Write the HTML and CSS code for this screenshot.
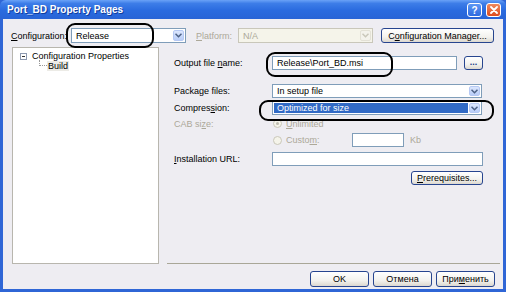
FILE: index.html
```html
<!DOCTYPE html>
<html lang="en">
<head>
<meta charset="UTF-8">
<title>Port_BD Property Pages</title>
<link rel="stylesheet" href="styles.css">
</head>
<body>
<div class="window">
    <div class="titlebar">
        <span class="title">Port_BD Property Pages</span>
        <div class="caption-btns">
            <span class="cap-btn help">?</span>
            <span class="cap-btn close">
                <svg width="8" height="8" viewBox="0 0 8 8"><path d="M1 1L7 7M7 1L1 7" stroke="#fff" stroke-width="1.8" stroke-linecap="round"/></svg>
            </span>
        </div>
    </div>
    <div class="client">
        <div class="config-row">
            <span class="lbl cfg-lbl"><u>C</u>onfiguration:</span>
            <div class="combo cfg-combo">
                <span class="combo-text">Release</span>
                <span class="drop"><svg width="7" height="5" viewBox="0 0 7 5"><path d="M0.5 0.8L3.5 3.8L6.5 0.8" fill="none" stroke="#4d6185" stroke-width="1.5"/></svg></span>
                <span class="mark mark-cfg"></span>
            </div>
            <span class="lbl disabled plat-lbl"><u>P</u>latform:</span>
            <div class="combo plat-combo off">
                <span class="combo-text">N/A</span>
                <span class="drop"><svg width="7" height="5" viewBox="0 0 7 5"><path d="M0.5 0.8L3.5 3.8L6.5 0.8" fill="none" stroke="#c9c7ba" stroke-width="1.5"/></svg></span>
            </div>
            <button class="btn cfg-mgr">C<u>o</u>nfiguration Manager...</button>
        </div>

        <div class="main">
            <div class="tree">
                <div class="node root">
                    <span class="expander"></span>
                    <span>Configuration Properties</span>
                </div>
                <div class="node child">
                    <span class="connector"></span>
                    <span class="leaf">Build</span>
                </div>
            </div>

            <div class="props">
                <div class="row row-output">
                    <span class="lbl field-lbl">Output file <u>n</u>ame:</span>
                    <div class="textbox out-box">
                        <span>Release\Port_BD.msi</span>
                        <span class="mark mark-out"></span>
                    </div>
                    <button class="btn browse">...</button>
                </div>
                <div class="row row-package">
                    <span class="lbl field-lbl">Package files:</span>
                    <div class="combo wide">
                        <span class="combo-text">In setup file</span>
                        <span class="drop"><svg width="7" height="5" viewBox="0 0 7 5"><path d="M0.5 0.8L3.5 3.8L6.5 0.8" fill="none" stroke="#4d6185" stroke-width="1.5"/></svg></span>
                    </div>
                </div>
                <div class="row row-compress">
                    <span class="lbl field-lbl">Compres<u>s</u>ion:</span>
                    <div class="combo wide">
                        <span class="combo-text selected">Optimized for size</span>
                        <span class="drop"><svg width="7" height="5" viewBox="0 0 7 5"><path d="M0.5 0.8L3.5 3.8L6.5 0.8" fill="none" stroke="#4d6185" stroke-width="1.5"/></svg></span>
                        <span class="mark mark-comp"></span>
                    </div>
                </div>
                <div class="row row-cab">
                    <span class="lbl field-lbl disabled">CAB si<u>z</u>e:</span>
                    <span class="radio checked"></span>
                    <span class="lbl disabled"><u>U</u>nlimited</span>
                </div>
                <div class="row row-custom">
                    <span class="lbl field-lbl"></span>
                    <span class="radio"></span>
                    <span class="lbl disabled custom-lbl">Custo<u>m</u>:</span>
                    <div class="textbox kb-box off"></div>
                    <span class="lbl disabled kb-lbl">Kb</span>
                </div>
                <div class="row row-url">
                    <span class="lbl field-lbl"><u>I</u>nstallation URL:</span>
                    <div class="textbox url-box"></div>
                </div>
                <div class="row row-prereq">
                    <button class="btn prereq"><u>P</u>rerequisites...</button>
                </div>
            </div>
        </div>

        <div class="footer">
            <button class="btn dlg-btn">OK</button>
            <button class="btn dlg-btn">Отмена</button>
            <button class="btn dlg-btn">При<u>м</u>енить</button>
        </div>
    </div>
</div>
</body>
</html>
```

FILE: styles.css
```css
* {
    box-sizing: border-box;
}

body {
    margin: 0;
    font-family: "Liberation Sans", Arial, sans-serif;
    font-size: 9px;
    color: #000;
}

.window {
    width: 506px;
    height: 292px;
    display: flex;
    flex-direction: column;
    background: #2f66d6;
}

.titlebar {
    height: 19px;
    display: flex;
    align-items: center;
    justify-content: space-between;
    padding: 0 5px 0 7px;
    background: linear-gradient(#6aa2f7 0%, #3d7de8 18%, #2a6bdf 55%, #2864d6 100%);
    border-radius: 6px 6px 0 0;
}

.title {
    color: #fff;
    font-weight: bold;
    font-size: 10px;
    text-shadow: 1px 1px 0 #0f3c9c;
}

.caption-btns {
    display: flex;
    gap: 4px;
    padding-top: 1px;
}

.cap-btn {
    width: 15px;
    height: 14px;
    border: 1px solid #fff;
    border-radius: 3px;
    display: flex;
    align-items: center;
    justify-content: center;
    color: #fff;
    font-weight: bold;
    font-size: 10px;
}

.help {
    background: linear-gradient(#5d97f4, #2d6ae0);
}

.close {
    background: linear-gradient(#f08a5e, #dc4b1f);
}

.client {
    flex: 1;
    margin: 0 3px 3px 3px;
    background: #eeedf2;
    display: flex;
    flex-direction: column;
}

.lbl {
    white-space: nowrap;
}

.disabled {
    color: #aca899;
}

/* top configuration row */
.config-row {
    display: flex;
    align-items: center;
    height: 15px;
    margin-top: 9px;
    padding: 0 9px 0 8px;
}

.cfg-lbl {
    width: 60px;
}

.plat-lbl {
    margin-left: 10px;
    width: 42px;
}

.combo {
    position: relative;
    height: 15px;
    display: flex;
    align-items: center;
    background: #fff;
    border: 1px solid #7f9db9;
    padding: 1px;
}

.combo-text {
    flex: 1;
    height: 100%;
    display: flex;
    align-items: center;
    padding-left: 3px;
    white-space: nowrap;
}

.combo-text.selected {
    background: #316ac5;
    color: #fff;
}

.drop {
    width: 11px;
    height: 100%;
    margin-left: 1px;
    display: flex;
    align-items: center;
    justify-content: center;
    border: 1px solid #b6c9f4;
    border-radius: 2px;
    background: linear-gradient(#dbe6fd, #b9cdf8);
}

.cfg-combo {
    width: 115px;
}

.plat-combo {
    width: 135px;
}

.off {
    background: #f5f4ea;
    border-color: #c9c7ba;
    color: #aca899;
}

.off .drop {
    border-color: #e3e1d6;
    background: #f3f2ec;
}

.btn {
    font-family: "Liberation Sans", Arial, sans-serif;
    font-size: 9px;
    color: #000;
    height: 15px;
    padding: 0;
    border: 1px solid #27458f;
    border-radius: 3px;
    background: linear-gradient(#ffffff, #f3f2ee 60%, #dcd8cf);
    white-space: nowrap;
}

.cfg-mgr {
    margin-left: auto;
    width: 113px;
}

/* annotation ovals drawn over the screenshot */
.mark {
    position: absolute;
    border: 2px solid #000;
    border-radius: 9px;
}

.mark-cfg {
    left: -6px;
    top: -6px;
    width: 88px;
    height: 25px;
}

.mark-out {
    left: -7px;
    top: -5px;
    width: 127px;
    height: 25px;
}

.mark-comp {
    left: -14px;
    top: -2px;
    width: 235px;
    height: 21px;
}

/* tree + property grid */
.main {
    display: flex;
    margin: 4px 3px 0 9px;
    height: 217px;
}

.tree {
    width: 148px;
    background: #fff;
    border: 1px solid #b8b6ae;
    padding: 3px 0 0 7px;
}

.node {
    display: flex;
    align-items: center;
    height: 10px;
}

.expander {
    position: relative;
    width: 7px;
    height: 7px;
    border: 1px solid #8d9ab0;
    margin-right: 5px;
}

.expander::after {
    content: "";
    position: absolute;
    left: 1px;
    top: 2px;
    width: 3px;
    height: 1px;
    background: #333;
}

.child {
    padding-left: 19px;
}

.connector {
    width: 8px;
    height: 6px;
    margin-top: -6px;
    border-left: 1px dotted #9a9a9a;
    border-bottom: 1px dotted #9a9a9a;
}

.leaf {
    background: #ecebe6;
    padding: 0 1px;
}

.props {
    flex: 1;
    margin-left: 8px;
    border-bottom: 1px solid #a9a798;
    padding: 9px 17px 0 7px;
}

.row {
    display: flex;
    align-items: center;
    height: 14px;
}

.field-lbl {
    width: 98px;
}

.textbox {
    position: relative;
    height: 14px;
    background: #fff;
    border: 1px solid #7f9db9;
    display: flex;
    align-items: center;
    padding-left: 4px;
}

.out-box {
    width: 185px;
}

.browse {
    width: 19px;
    height: 14px;
    margin-left: auto;
    border-color: #27458f;
    font-weight: bold;
    color: #1b3c86;
    padding-bottom: 3px;
    line-height: 8px;
}

.combo.wide {
    width: 210px;
    height: 14px;
}

.row-package {
    margin-top: 14px;
}

.row-compress {
    margin-top: 3px;
}

.row-cab {
    margin-top: 2px;
    height: 13px;
}

.row-custom {
    margin-top: 3px;
}

.row-url {
    margin-top: 5px;
}

.row-prereq {
    margin-top: 5px;
    justify-content: flex-end;
}

.radio {
    width: 9px;
    height: 9px;
    border: 1px solid #c9c7ba;
    border-radius: 50%;
    margin: 0 4px 0 1px;
    background: #f5f4ea;
    display: flex;
    align-items: center;
    justify-content: center;
}

.radio.checked::after {
    content: "";
    width: 3px;
    height: 3px;
    border-radius: 50%;
    background: #bdbbb0;
}

.custom-lbl {
    width: 66px;
}

.kb-box {
    width: 52px;
}

.kb-lbl {
    margin-left: 6px;
}

.url-box {
    width: 211px;
}

.prereq {
    width: 72px;
    height: 14px;
}

.footer {
    display: flex;
    justify-content: flex-end;
    gap: 4px;
    margin-top: 7px;
    padding-right: 8px;
}

.dlg-btn {
    width: 59px;
    height: 16px;
}
```
